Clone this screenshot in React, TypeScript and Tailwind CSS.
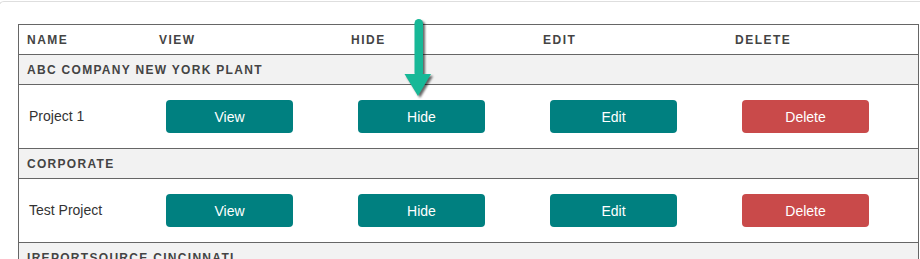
import React from "react";

const cols = "grid grid-cols-[132px_192px_192px_192px_191px]";

function Btn({ label, red }: { label: string; red?: boolean }) {
  return (
    <div className="pl-[15px]">
      <button
        className={`w-[127px] h-[33px] rounded-[4px] text-white text-[14px] leading-none flex items-center justify-center ${
          red ? "bg-[#c94a4a]" : "bg-[#008080]"
        }`}
      >
        {label}
      </button>
    </div>
  );
}

function Group({ name, last }: { name: string; last?: boolean }) {
  return (
    <div
      className={`h-[30px] bg-[#f2f2f2] flex items-center px-[8px] font-bold text-[12px] tracking-[1.3px] text-[#444] ${
        last ? "" : "border-b border-[#666]"
      }`}
    >
      {name}
    </div>
  );
}

function Row({ name }: { name: string }) {
  return (
    <div className={`${cols} h-[64px] items-center border-b border-[#666]`}>
      <div className="pl-[10px] text-[14px] text-[#333]">{name}</div>
      <Btn label="View" />
      <Btn label="Hide" />
      <Btn label="Edit" />
      <Btn label="Delete" red />
    </div>
  );
}

export default function App() {
  return (
    <div
      className="w-[920px] h-[259px] overflow-hidden bg-white relative"
      style={{ fontFamily: '"Liberation Sans", Arial, sans-serif' }}
    >
      <div className="-ml-[2px] mt-px border-t border-l border-[#dedede] rounded-tl-[6px] pt-[22px] pl-[19px] h-[300px]">
        <div className="w-[901px] border border-[#666] border-b-0">
          <div
            className={`${cols} h-[30px] items-center border-b border-[#666] font-bold text-[12px] tracking-[1.5px] text-[#444]`}
          >
            <div className="pl-[8px]">NAME</div>
            <div className="pl-[8px]">VIEW</div>
            <div className="pl-[8px]">HIDE</div>
            <div className="pl-[8px]">EDIT</div>
            <div className="pl-[8px]">DELETE</div>
          </div>
          <Group name="ABC COMPANY NEW YORK PLANT" />
          <Row name="Project 1" />
          <Group name="CORPORATE" />
          <Row name="Test Project" />
          <Group name="IREPORTSOURCE CINCINNATI" last />
        </div>
      </div>
      <svg
        className="absolute left-[400px] top-[14px] drop-shadow-[2px_2px_1px_rgba(0,0,0,0.6)]"
        width="36"
        height="88"
        viewBox="0 0 36 88"
      >
        <rect x="14.5" y="5" width="8.5" height="58" rx="4.25" fill="#17b897" />
        <polygon points="4.5,60 31,60 18,82" fill="#17b897" />
      </svg>
    </div>
  );
}
